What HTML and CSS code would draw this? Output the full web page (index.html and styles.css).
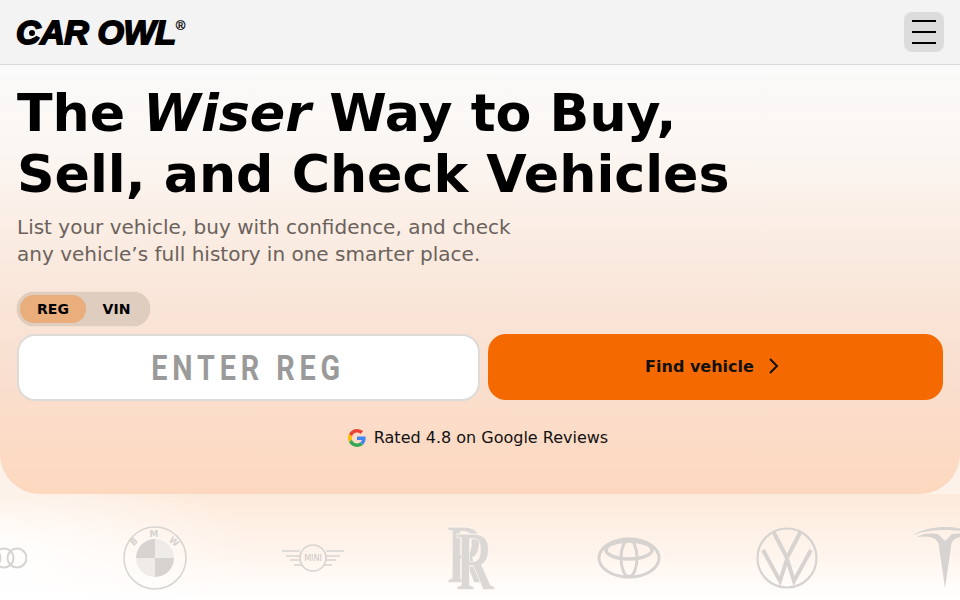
FILE: index.html
```html
<!DOCTYPE html>
<html lang="en">
  <head>
    <title>Car Owl</title>
    <link rel="stylesheet" href="styles.css">
  </head>
  <body>
    <header class="topbar">
      <a class="logo"><span class="logo-c">C<i class="logo-eye"></i></span>AR OWL<sup class="logo-reg">®</sup></a>
      <button class="menu-btn" type="button">
        <span class="menu-line"></span>
        <span class="menu-line"></span>
        <span class="menu-line"></span>
      </button>
    </header>

    <section class="hero">
      <h1 class="hero-title">The <em>Wiser</em> Way to Buy,<br>Sell, and Check Vehicles</h1>
      <p class="hero-text">List your vehicle, buy with confidence, and check<br>any vehicle’s full history in one smarter place.</p>

      <div class="toggle">
        <span class="toggle-item active">REG</span>
        <span class="toggle-item">VIN</span>
      </div>

      <form class="search">
        <div class="reg-input"><span class="reg-placeholder">ENTER REG</span></div>
        <button class="find-btn" type="button">
          Find vehicle
          <svg width="12" height="18" viewBox="0 0 12 18"><path d="M2 2l7 7-7 7" fill="none" stroke="#111" stroke-width="2"/></svg>
        </button>
      </form>

      <div class="rating">
        <svg width="18" height="18" viewBox="0 0 48 48">
          <path fill="#EA4335" d="M24 9.500c3.500 0 6.700 1.200 9.200 3.600l6.900-6.900C35.900 2.400 30.500 0 24 0 14.600 0 6.500 5.400 2.600 13.200l8 6.200C12.500 13.700 17.800 9.500 24 9.500z"/>
          <path fill="#4285F4" d="M47 24.500c0-1.600-.1-3.100-.4-4.500H24v9h12.900c-.6 3-2.200 5.500-4.700 7.200l7.700 6C44.400 37.900 47 31.800 47 24.500z"/>
          <path fill="#FBBC05" d="M10.600 28.600A14.500 14.500 0 0 1 10.600 19.400l-8-6.200A24 24 0 0 0 2.600 34.800l8-6.200z"/>
          <path fill="#34A853" d="M24 48c6.500 0 11.900-2.100 15.900-5.800l-7.700-6c-2.200 1.500-4.900 2.300-8.200 2.300-6.200 0-11.500-4.200-13.400-9.900l-8 6.200C6.500 42.600 14.600 48 24 48z"/>
        </svg>
        <span>Rated 4.8 on Google Reviews</span>
      </div>
    </section>

    <section class="brands">
      <div class="brand-track">
        <div class="brand">
          <svg width="60" height="24" viewBox="0 0 60 24">
            <g fill="none" stroke="#d6d3d0" stroke-width="2">
              <circle cx="11" cy="12" r="9.500"/><circle cx="24" cy="12" r="9.500"/><circle cx="37" cy="12" r="9.500"/><circle cx="50" cy="12" r="9.500"/>
            </g>
          </svg>
        </div>

        <div class="brand">
          <svg width="64" height="64" viewBox="0 0 64 64">
            <circle cx="32" cy="32" r="31" fill="none" stroke="#d9d5d2" stroke-width="1.600"/>
            <path d="M32 32V13A19 19 0 0 0 13 32z" fill="#d6d3d0"/>
            <path d="M32 32V13A19 19 0 0 1 51 32z" fill="#efebe8"/>
            <path d="M32 32H13A19 19 0 0 0 32 51z" fill="#efebe8"/>
            <path d="M32 32H51A19 19 0 0 1 32 51z" fill="#d6d3d0"/>
            <g class="bmw-letters">
              <text transform="translate(13 18) rotate(-40)" text-anchor="middle">B</text>
              <text transform="translate(31 11)" text-anchor="middle">M</text>
              <text transform="translate(49 18) rotate(40)" text-anchor="middle">W</text>
            </g>
          </svg>
        </div>

        <div class="brand">
          <svg width="64" height="30" viewBox="0 0 64 30">
            <g fill="none" stroke="#d6d3d0" stroke-width="1.600">
              <circle cx="32" cy="15" r="13"/>
              <path d="M1 8h18M5 13h14M9 17h10M13 22h8M45 8h18M45 13h14M45 17h10M43 22h8"/>
            </g>
            <text class="mini-text" x="32" y="18" text-anchor="middle">MINI</text>
          </svg>
        </div>

        <div class="brand">
          <svg width="48" height="90" viewBox="0 -12 78 90" preserveAspectRatio="none">
            <text class="rr-text" x="0 14.500" y="58 65">RR</text>
          </svg>
        </div>

        <div class="brand">
          <svg width="64" height="42" viewBox="0 0 64 42">
            <g fill="none" stroke="#d6d3d0">
              <ellipse cx="32" cy="21" rx="30" ry="19" stroke-width="3"/>
              <ellipse cx="32" cy="21" rx="8" ry="18.500" stroke-width="3"/>
              <ellipse cx="32" cy="13" rx="23" ry="9" stroke-width="3.500"/>
            </g>
          </svg>
        </div>

        <div class="brand">
          <svg width="62" height="62" viewBox="0 0 62 62">
            <g fill="none" stroke="#d6d3d0">
              <circle cx="31" cy="31" r="29.500" stroke-width="2.200"/>
              <path d="M17 4l14 27 14-27M7 23l17 31 7-22 7 22 17-31" stroke-width="4"/>
            </g>
          </svg>
        </div>

        <div class="brand">
          <svg width="64" height="62" viewBox="0 0 64 62">
            <path d="M0 8C10 2 22 0 32 0s22 2 32 8C54 4 42 3 32 3S10 4 0 8z" fill="#d6d3d0"/>
            <path d="M4 10C10 6 18 6 25 7l7 7 7-7c7-1 15-1 21 3-6-1-14-1-18 2-3 2-4 5-4 8l-6 41-6-41c0-3-1-6-4-8-4-3-12-3-18-2z" fill="#d6d3d0"/>
          </svg>
        </div>
      </div>
    </section>
  </body>
</html>
```

FILE: styles.css
```css
* {
  box-sizing: border-box;
}
body {
  margin: 0;
  height: 600px;
  overflow: hidden;
  font-family: "DejaVu Sans", sans-serif;
  color: #000;
  background: #fdf2e9;
}
.topbar {
  display: flex;
  justify-content: space-between;
  align-items: center;
  height: 65px;
  padding: 0 16px;
  background: #f3f3f3;
  border-bottom: 1px solid #d8d8d8;
}
.logo {
  font-family: "Liberation Sans", sans-serif;
  font-size: 34px;
  font-weight: 700;
  font-style: italic;
  letter-spacing: -0.4px;
  -webkit-text-stroke: 1.8px #000;
  color: #000;
  display: flex;
  align-items: flex-start;
}
.logo-c {
  position: relative;
}
.logo-eye {
  position: absolute;
  left: 11px;
  top: 15px;
  width: 10px;
  height: 10px;
  border-radius: 50%;
  background: #000;
  border: 2px solid #f3f3f3;
}
.logo-reg {
  font-size: 13px;
  font-style: normal;
  font-weight: 400;
  line-height: 1;
  margin: 6px 0 0 0;
  -webkit-text-stroke: 0.3px #000;
}
.menu-btn {
  display: flex;
  flex-direction: column;
  justify-content: center;
  align-items: center;
  gap: 9px;
  width: 40px;
  height: 40px;
  padding: 0;
  border: none;
  border-radius: 8px;
  background: #dcdcdc;
}
.menu-line {
  width: 24px;
  height: 2px;
  background: #000;
}
.hero {
  height: 429px;
  padding: 18px 17px 0;
  border-radius: 0 0 40px 40px;
  background: linear-gradient(to bottom, #fafafa 0%, #fbf6f2 20%, #faeadf 45%, #f9e0d0 70%, #fdd8bf 100%);
}
.hero-title {
  margin: 0;
  font-size: 52.2px;
  line-height: 61px;
  font-weight: 700;
}
.hero-text {
  margin: 9px 0 0;
  font-size: 20px;
  line-height: 27px;
  color: #6b625c;
}
.toggle {
  display: inline-flex;
  margin-top: 24px;
  padding: 3px;
  height: 34px;
  border-radius: 17px;
  background: #dfcdbf;
  box-shadow: 0 0 1px #c9b5a5;
}
.toggle-item {
  display: flex;
  align-items: center;
  justify-content: center;
  width: 61px;
  font-size: 14px;
  font-weight: 700;
  border-radius: 14px;
}
.toggle-item.active {
  width: 66px;
  background: #eaad7c;
}
.search {
  display: flex;
  gap: 8px;
  margin-top: 8px;
}
.reg-input {
  display: flex;
  align-items: center;
  justify-content: center;
  width: 463px;
  height: 67px;
  border: 2px solid #dedad8;
  border-radius: 18px;
  background: #fff;
}
.reg-placeholder {
  padding-top: 2px;
  font-family: "Roboto", sans-serif;
  font-size: 35px;
  font-weight: 700;
  letter-spacing: 6px;
  color: #9a9a9a;
  transform: scaleX(0.82);
}
.find-btn {
  display: flex;
  align-items: center;
  justify-content: center;
  gap: 14px;
  width: 455px;
  height: 66px;
  padding: 0 6px 2px 0;
  border: none;
  border-radius: 18px;
  background: #f56a00;
  color: #111;
  font-family: "DejaVu Sans", sans-serif;
  font-size: 16px;
  font-weight: 700;
}
.rating {
  display: flex;
  justify-content: center;
  align-items: center;
  gap: 8px;
  margin-top: 27px;
  padding-right: 4px;
  font-size: 16px;
  color: #111;
}
.brands {
  height: 106px;
  padding-top: 22px;
  overflow: hidden;
  background:
    radial-gradient(ellipse 260px 110px at 0 70px, #fff 0, transparent 100%),
    linear-gradient(to bottom, #fdeadb 0%, #fff5ee 60%, #fff 100%);
}
.brand-track {
  display: flex;
  align-items: center;
  height: 84px;
  margin-left: -82px;
}
.brand {
  display: flex;
  justify-content: center;
  flex: 0 0 158px;
}
.brand svg {
  flex: 0 0 auto;
}
.bmw-letters text {
  font-family: "DejaVu Sans", sans-serif;
  font-size: 9px;
  font-weight: 700;
  fill: #d6d3d0;
}
.mini-text {
  font-family: "DejaVu Sans", sans-serif;
  font-size: 8px;
  fill: #c9c6c3;
}
.rr-text {
  font-family: "Liberation Serif", serif;
  font-size: 85px;
  font-weight: 700;
  fill: #dad7d4;
  stroke: #fff6ef;
  stroke-width: 0.8px;
}
```
